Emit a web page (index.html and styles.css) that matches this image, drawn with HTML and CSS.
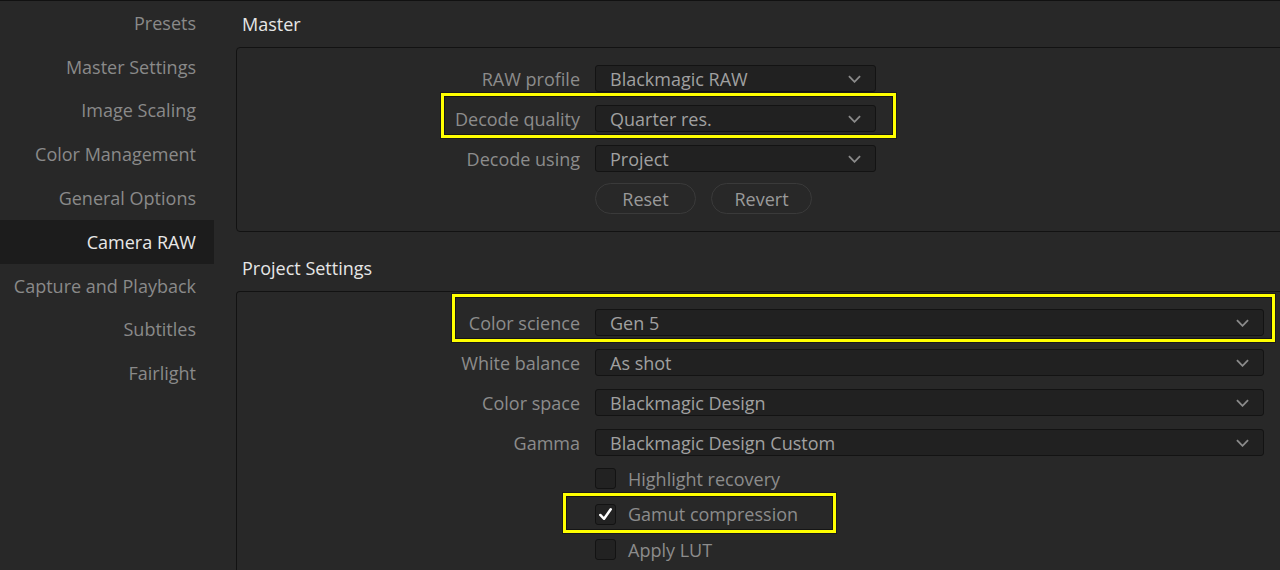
FILE: index.html
```html
<!DOCTYPE html>
<html lang="en">
<head>
<meta charset="utf-8">
<title>Project Settings - Camera RAW</title>
<link rel="stylesheet" href="styles.css">
</head>
<body>
<div class="app">
  <nav class="sidebar">
    <div class="nav-item">Presets</div>
    <div class="nav-item">Master Settings</div>
    <div class="nav-item">Image Scaling</div>
    <div class="nav-item">Color Management</div>
    <div class="nav-item">General Options</div>
    <div class="nav-item active">Camera RAW</div>
    <div class="nav-item">Capture and Playback</div>
    <div class="nav-item">Subtitles</div>
    <div class="nav-item">Fairlight</div>
  </nav>
  <main class="main">
    <h2 class="section-title">Master</h2>
    <section class="panel">
      <div class="field">
        <span class="label">RAW profile</span>
        <div class="select short"><span>Blackmagic RAW</span><svg class="chev" viewBox="0 0 14 8"><path d="M1 1 L7 7 L13 1"/></svg></div>
      </div>
      <div class="field">
        <span class="label">Decode quality</span>
        <div class="select short"><span>Quarter res.</span><svg class="chev" viewBox="0 0 14 8"><path d="M1 1 L7 7 L13 1"/></svg></div>
        <div class="hl hl-decode"></div>
      </div>
      <div class="field">
        <span class="label">Decode using</span>
        <div class="select short"><span>Project</span><svg class="chev" viewBox="0 0 14 8"><path d="M1 1 L7 7 L13 1"/></svg></div>
      </div>
      <div class="field buttons">
        <span class="label"></span>
        <button class="pill">Reset</button>
        <button class="pill">Revert</button>
      </div>
    </section>

    <h2 class="section-title second">Project Settings</h2>
    <section class="panel wide">
      <div class="field">
        <span class="label">Color science</span>
        <div class="select"><span>Gen 5</span><svg class="chev" viewBox="0 0 14 8"><path d="M1 1 L7 7 L13 1"/></svg></div>
        <div class="hl hl-science"></div>
      </div>
      <div class="field">
        <span class="label">White balance</span>
        <div class="select"><span>As shot</span><svg class="chev" viewBox="0 0 14 8"><path d="M1 1 L7 7 L13 1"/></svg></div>
      </div>
      <div class="field">
        <span class="label">Color space</span>
        <div class="select"><span>Blackmagic Design</span><svg class="chev" viewBox="0 0 14 8"><path d="M1 1 L7 7 L13 1"/></svg></div>
      </div>
      <div class="field">
        <span class="label">Gamma</span>
        <div class="select"><span>Blackmagic Design Custom</span><svg class="chev" viewBox="0 0 14 8"><path d="M1 1 L7 7 L13 1"/></svg></div>
      </div>
      <div class="checks">
        <div class="field check-row">
          <span class="label"></span>
          <span class="box"></span>
          <span class="check-label">Highlight recovery</span>
        </div>
        <div class="field check-row">
          <span class="label"></span>
          <span class="box checked"><svg viewBox="0 0 20 20"><path d="M4.5 10.5 L8.5 14.5 L15.5 4.5"/></svg></span>
          <span class="check-label">Gamut compression</span>
          <div class="hl hl-gamut"></div>
        </div>
        <div class="field check-row">
          <span class="label"></span>
          <span class="box"></span>
          <span class="check-label">Apply LUT</span>
        </div>
      </div>
    </section>
  </main>
</div>
</body>
</html>
```
FILE: styles.css
```css
* { box-sizing: border-box; }

html, body {
  margin: 0;
  padding: 0;
  height: 570px;
  overflow: hidden;
  background: #282828;
}

body {
  font-family: "Open Sans", "Noto Sans", "DejaVu Sans", sans-serif;
  font-size: 18px;
  color: #8c8c8c;
}

.app {
  display: flex;
  height: 570px;
  border-top: 1px solid #111111;
}

.sidebar {
  width: 214px;
  flex: none;
  display: flex;
  flex-direction: column;
}

.nav-item {
  height: 43.8px;
  flex: none;
  display: flex;
  align-items: center;
  justify-content: flex-end;
  padding-right: 18px;
  color: #8a8a8a;
  white-space: nowrap;
}

.nav-item.active {
  background: #1c1c1c;
  color: #e8e8e8;
}

.main {
  flex: 1;
  min-width: 0;
  padding-left: 22px;
  display: flex;
  flex-direction: column;
}

.section-title {
  margin: 0;
  height: 46px;
  flex: none;
  display: flex;
  align-items: center;
  padding-left: 6px;
  font-size: 18px;
  font-weight: 400;
  color: #e6e6e6;
}

.section-title.second {
  margin-top: 13px;
}

.panel {
  margin-right: -20px;
  border: 1px solid #121212;
  border-radius: 4px;
  padding: 17px 35px 17px 0;
  display: flex;
  flex-direction: column;
  gap: 13px;
  flex: none;
}

.panel.wide {
  flex: 1 0 auto;
  border-bottom: none;
}

.field {
  position: relative;
  display: flex;
  align-items: center;
  gap: 15px;
}

.label {
  width: 343px;
  flex: none;
  text-align: right;
  color: #8c8c8c;
  white-space: nowrap;
}

.select {
  flex: 1;
  height: 27px;
  display: flex;
  align-items: center;
  justify-content: space-between;
  padding: 0 14px 0 14px;
  background: #212121;
  border: 1px solid #131313;
  border-radius: 3px;
  color: #a0a0a0;
  white-space: nowrap;
}

.select.short {
  flex: none;
  width: 281px;
}

.chev {
  width: 13px;
  height: 8px;
  fill: none;
  stroke: #8a8a8a;
  stroke-width: 2;
  margin-right: 0;
}

.buttons {
  margin-top: -2px;
}

.pill {
  width: 101px;
  height: 31px;
  border: 1px solid #3a3a3a;
  border-radius: 16px;
  background: transparent;
  color: #9a9a9a;
  font-family: inherit;
  font-size: 18px;
  padding: 0;
}

.checks {
  display: flex;
  flex-direction: column;
  gap: 14.5px;
  margin-top: -1px;
}

.check-row {
  height: 21px;
}

.box {
  width: 21px;
  height: 21px;
  flex: none;
  background: #222222;
  border: 1px solid #131313;
  border-radius: 3px;
  display: flex;
  align-items: center;
  justify-content: center;
}

.box svg {
  width: 19px;
  height: 19px;
  fill: none;
  stroke: #ffffff;
  stroke-width: 2.6;
  stroke-linecap: round;
  stroke-linejoin: round;
}

.check-label {
  color: #8c8c8c;
  margin-left: -3px;
  white-space: nowrap;
}

/* yellow annotation highlights */
.hl {
  position: absolute;
  border: 3px solid #ffff00;
  box-shadow: inset 0 0 0 1px #151515, 0 0 0 1px #1a1a1a;
  pointer-events: none;
}

.hl-decode {
  left: 204px;
  width: 455px;
  top: -12px;
  bottom: -6px;
}

.hl-science {
  left: 215px;
  right: -11px;
  top: -15px;
  bottom: -6px;
}

.hl-gamut {
  left: 326px;
  width: 273px;
  top: -11px;
  bottom: -8px;
}
```
